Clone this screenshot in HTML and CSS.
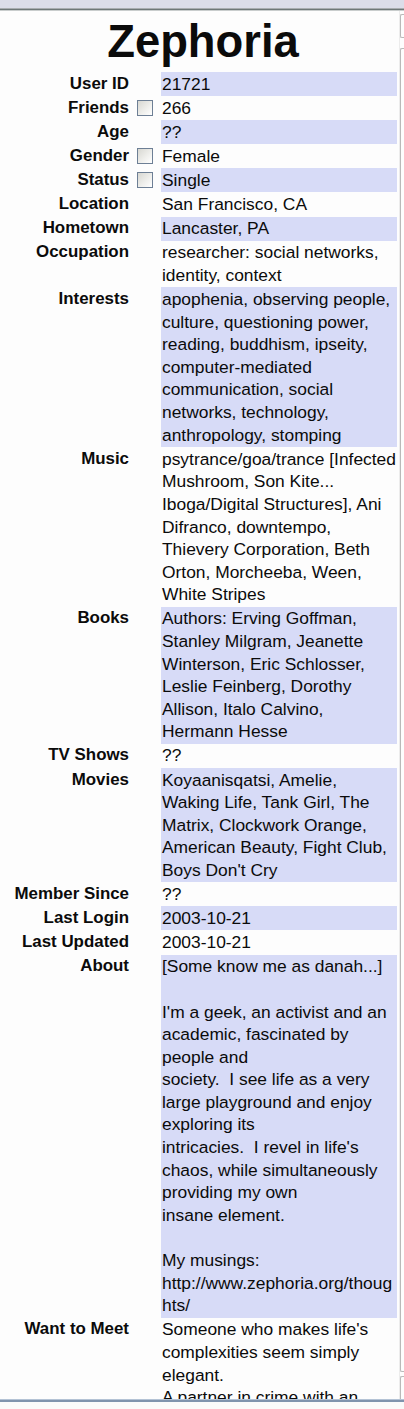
FILE: index.html
```html
<!DOCTYPE html>
<html lang="en">
<head>
<meta charset="utf-8">
<title>Zephoria</title>
<link rel="stylesheet" href="styles.css">
</head>
<body>
<div class="window">
  <div class="topbar"></div>
  <div class="rule"></div>
  <div class="viewport">
    <div class="page">
      <h1 class="title">Zephoria</h1>
      <div class="profile">
        <div class="label">User ID</div><div class="check"></div><div class="value hl">21721</div>
        <div class="label">Friends</div><div class="check"><span class="box"></span></div><div class="value">266</div>
        <div class="label">Age</div><div class="check"></div><div class="value hl">??</div>
        <div class="label">Gender</div><div class="check"><span class="box"></span></div><div class="value">Female</div>
        <div class="label">Status</div><div class="check"><span class="box"></span></div><div class="value hl">Single</div>
        <div class="label">Location</div><div class="check"></div><div class="value">San Francisco, CA</div>
        <div class="label">Hometown</div><div class="check"></div><div class="value hl">Lancaster, PA</div>
        <div class="label">Occupation</div><div class="check"></div><div class="value">researcher: social networks, identity, context</div>
        <div class="label">Interests</div><div class="check"></div><div class="value hl">apophenia, observing people, culture, questioning power, reading, buddhism, ipseity, computer-mediated communication, social networks, technology, anthropology, stomping</div>
        <div class="label">Music</div><div class="check"></div><div class="value">psytrance/goa/trance [Infected Mushroom, Son Kite... Iboga/Digital Structures], Ani Difranco, downtempo, Thievery Corporation, Beth Orton, Morcheeba, Ween, White Stripes</div>
        <div class="label">Books</div><div class="check"></div><div class="value hl">Authors: Erving Goffman, Stanley Milgram, Jeanette Winterson, Eric Schlosser, Leslie Feinberg, Dorothy Allison, Italo Calvino, Hermann Hesse</div>
        <div class="label">TV Shows</div><div class="check"></div><div class="value">??</div>
        <div class="label">Movies</div><div class="check"></div><div class="value hl">Koyaanisqatsi, Amelie, Waking Life, Tank Girl, The Matrix, Clockwork Orange, American Beauty, Fight Club, Boys Don't Cry</div>
        <div class="label">Member Since</div><div class="check"></div><div class="value">??</div>
        <div class="label">Last Login</div><div class="check"></div><div class="value hl">2003-10-21</div>
        <div class="label">Last Updated</div><div class="check"></div><div class="value">2003-10-21</div>
        <div class="label">About</div><div class="check"></div><div class="value hl">[Some know me as danah...]<br><br>I'm a geek, an activist and an academic, fascinated by people and<br>society.&nbsp; I see life as a very large playground and enjoy exploring its<br>intricacies.&nbsp; I revel in life's chaos, while simultaneously providing my own<br>insane element.<br><br>My musings:<br><span class="url">http://www.zephoria.org/thoug<br>hts/</span></div>
        <div class="label">Want to Meet</div><div class="check"></div><div class="value">Someone who makes life's complexities seem simply elegant.<br>A partner in crime with an<br>eye for adventure and a mind for mischief.</div>
      </div>
    </div>
    <div class="scrollbar">
      <span class="sb-btn sb-up"></span>
      <span class="sb-thumb"></span>
      <span class="sb-btn sb-down"></span>
    </div>
  </div>
  <div class="bottombar"></div>
  <div class="statusbar"></div>
</div>
</body>
</html>
```

FILE: styles.css
```css
html, body {
  margin: 0;
  padding: 0;
  background: #ffffff;
}

.window {
  width: 404px;
  height: 1409px;
  overflow: hidden;
  display: flex;
  flex-direction: column;
  background: #fbfbfb;
}

.topbar {
  height: 8px;
  background: #dcdde9;
  flex: none;
}

.rule {
  height: 3px;
  flex: none;
  background: linear-gradient(#a9adb0 0 1px, #6f7878 1px 2px, #c9cdcd 2px 3px);
}

.viewport {
  height: 1388px;
  flex: none;
  display: flex;
  overflow: hidden;
  background: #fdfdfd;
}

.page {
  width: 399px;
  flex: none;
  font-family: "Liberation Sans", Arial, sans-serif;
  color: #0b0b0b;
}

.title {
  margin: 0;
  padding: 6px 0 5px 7px;
  text-align: center;
  font-size: 45.4px;
  line-height: 50px;
  font-weight: bold;
}

.profile {
  display: grid;
  grid-template-columns: 129px 32px 236px;
  align-items: stretch;
}

.label {
  text-align: right;
  font-weight: bold;
  font-size: 16.9px;
  line-height: 22.6px;
  padding: 0.75px 0;
  white-space: nowrap;
}

.check {
  padding: 0.75px 0;
}

.box {
  display: block;
  width: 14px;
  height: 14px;
  margin: 3px 0 0 8px;
  border: 1px solid #6d7f95;
  background: linear-gradient(135deg, #d8d8d2 0%, #f4f4f2 70%, #ffffff 100%);
}

.value {
  font-size: 17.4px;
  line-height: 22.6px;
  padding: 0.75px 0 0.75px 1px;
}

.value.hl {
  background: #d7dbf7;
}

.url {
  white-space: nowrap;
}

.scrollbar {
  flex: 1;
  position: relative;
  border-left: 1px solid #ececec;
}

.sb-btn,
.sb-thumb {
  position: absolute;
  left: 0;
  width: 4px;
  border: 1px solid #b9b9b9;
  border-right: none;
  border-radius: 2px 0 0 2px;
}

.sb-up {
  top: 3px;
  height: 22px;
}

.sb-thumb {
  top: 37px;
  height: 1322px;
}

.sb-down {
  top: 1365px;
  height: 30px;
}

.bottombar {
  flex: none;
  height: 3px;
  background: linear-gradient(#b4c3d5 0 1px, #7f93ad 1px 3px);
}

.statusbar {
  flex: 1;
  background: #fafafa;
}
```
